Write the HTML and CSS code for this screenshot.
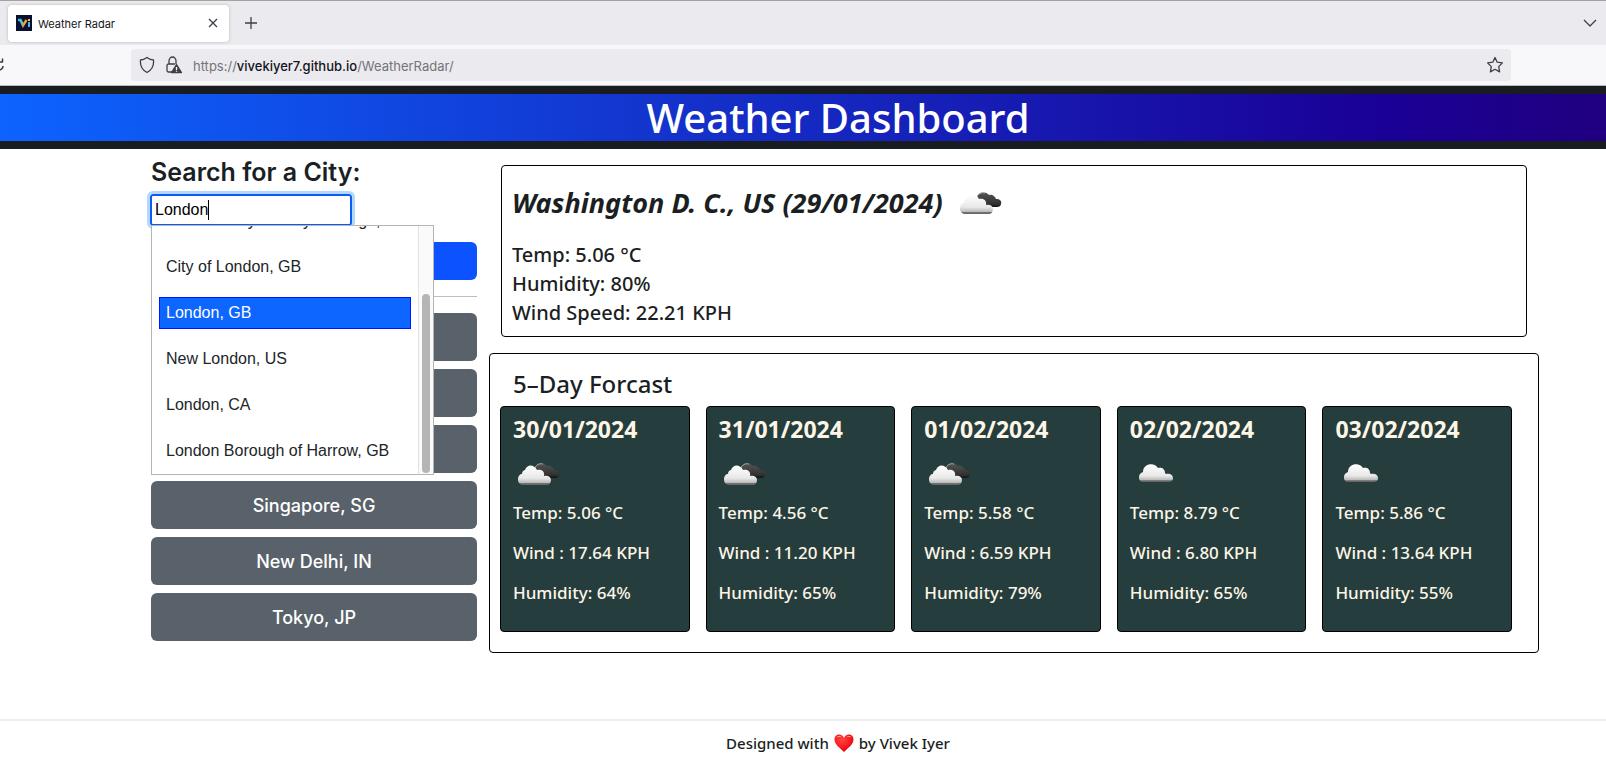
FILE: index.html
```html
<!DOCTYPE html>
<html lang="en">
<head>
<meta charset="utf-8">
<title>Weather Radar</title>
<link rel="stylesheet" href="styles.css">
</head>
<body>
<svg class="defs" width="0" height="0" aria-hidden="true">
  <defs>
    <linearGradient id="light" x1="0" y1="0" x2="0" y2="1">
      <stop offset="0" stop-color="#fff"/><stop offset=".65" stop-color="#e8e8e8"/><stop offset=".88" stop-color="#bbb"/><stop offset=".94" stop-color="#555"/><stop offset="1" stop-color="#777"/>
    </linearGradient>
    <linearGradient id="dark" x1="0" y1="0" x2="0" y2="1">
      <stop offset="0" stop-color="#555"/><stop offset=".8" stop-color="#303030"/><stop offset="1" stop-color="#111"/>
    </linearGradient>
    <radialGradient id="red" cx=".4" cy=".3" r=".8">
      <stop offset="0" stop-color="#ff4a40"/><stop offset=".6" stop-color="#f8131a"/><stop offset="1" stop-color="#b80010"/>
    </radialGradient>
    <linearGradient id="brand" x1="0" y1="0" x2="1" y2="0">
      <stop offset="0" stop-color="#2db8d8"/><stop offset=".4" stop-color="#58c8d0"/><stop offset=".7" stop-color="#f3a030"/><stop offset="1" stop-color="#f3a030"/>
    </linearGradient>
    <symbol id="broken" viewBox="0 0 50 50">
      <path fill="url(#dark)" d="M22 22c-1-6 8-9 12-4 3-1 6 1 7 4 4 0 6 2 5 5 0 2-2 3-4 3H29l-7-3z"/>
      <path fill="none" stroke="#aaa" d="M22 20c1-3 4-5 8-4"/>
      <path fill="url(#light)" d="M11 37c-4 0-6-2-6-5.500s2-5.500 4-5.500c0-3 2-4 3-4 2-6 9-6 12 0 5-1 8 2 7 6 4-1 7 1 7 4s-2 5-4 5z"/>
    </symbol>
    <symbol id="cloud" viewBox="0 0 50 50">
      <path fill="url(#light)" d="M14 34c-4 0-5-2-5-5s2-4 4-5c0-9 12-10 15-4 4-1 7 1 7 5l1 1c4-1 7 1 7 4s-2 4-5 4z"/>
    </symbol>
  </defs>
</svg>

<div class="tabs">
  <div class="tab">
    <svg class="favicon" viewBox="0 0 16 16" aria-hidden="true"><path fill="#0c1030" d="M0 0h16v16H0z"/><path fill="none" stroke="url(#brand)" stroke-width="2.500" d="M2 5h2.500l2.500 5.500L10.500 5"/><path stroke="#4cb8d8" stroke-width="2" d="M13 7v5"/><path stroke="#f3c040" stroke-width="2" d="M13 4v2"/></svg>
    <span class="tab-name">Weather Radar</span>
    <button class="icon-button" type="button" aria-label="Close tab"><svg width="10" height="10" viewBox="0 0 10 10"><path d="M1 1l8 8M9 1L1 9"/></svg></button>
  </div>
  <button class="icon-button new-tab" type="button" aria-label="New tab"><svg width="12" height="12" viewBox="0 0 12 12"><path d="M6 0v12M0 6h12"/></svg></button>
  <button class="icon-button all-tabs" type="button" aria-label="List all tabs"><svg width="14" height="8" viewBox="0 0 14 8"><path d="M1 1l6 6 6-6"/></svg></button>
</div>
<div class="toolbar">
  <button class="icon-button reload" type="button" aria-label="Reload"><svg width="4" height="16" viewBox="0 0 4 16"><path stroke-width="1.500" d="M0 5h2.500V1.500M0 13c2-1 3-2.500 3-4"/></svg></button>
  <div class="address">
    <svg width="16" height="18" viewBox="0 0 16 18"><path d="M8 1.500C6 3 4 4 1.500 4 1 9 3 14 8 16.500 13 14 15 9 14.500 4 12 4 10 3 8 1.500z"/></svg>
    <svg class="lock" width="18" height="18" viewBox="0 0 18 18"><path d="M4 8V5a3.500 4 0 0 1 7 0v3M7 16H3.500A1.500 1.500 0 0 1 2 14.500v-5A1.500 1.500 0 0 1 3.500 8H10"/><path class="solid" d="M11.500 8.500L16.500 16.500h-10z"/><path class="mark" d="M11.500 11v3M11.500 14.800v1"/></svg>
    <span class="url">https://<b>vivekiyer7.github.io</b>/WeatherRadar/</span>
    <button class="icon-button star" type="button" aria-label="Bookmark this page"><svg width="18" height="18" viewBox="0 0 18 18"><path d="M9 1.500l2.200 4.700 5.200.7-3.700 3.700.9 5.300L9 13.300l-4.600 2.600.9-5.300L1.600 6.900l5.200-.7z"/></svg></button>
  </div>
</div>

<header class="banner"><h1>Weather Dashboard</h1></header>

<main class="layout">
  <aside class="sidebar">
    <form class="search">
      <label class="search-title" for="city">Search for a City:</label>
      <div class="field">
        <input id="city" type="text" value="London" autocomplete="off"><span class="caret"></span>
        <div class="menu">
          <ul class="options">
            <li><button type="button">Londonderry County Borough, GB</button></li>
            <li><button type="button">City of London, GB</button></li>
            <li><button type="button" class="active">London, GB</button></li>
            <li><button type="button">New London, US</button></li>
            <li><button type="button">London, CA</button></li>
            <li><button type="button">London Borough of Harrow, GB</button></li>
          </ul>
          <div class="track"><div class="thumb"></div></div>
        </div>
      </div>
      <button class="submit" type="submit" aria-label="Search"></button>
    </form>
    <hr class="rule">
    <div class="history">
      <button type="button" aria-label="Recent city 1"></button>
      <button type="button" aria-label="Recent city 2"></button>
      <button type="button" aria-label="Recent city 3"></button>
      <button type="button">Singapore, SG</button>
      <button type="button">New Delhi, IN</button>
      <button type="button">Tokyo, JP</button>
    </div>
  </aside>
  <div class="weather">
    <section class="today">
      <h2>Washington D. C., US (29/01/2024) <svg class="sky" role="img" aria-label="Broken clouds"><use href="#broken"/></svg></h2>
      <p>Temp: 5.06 °C</p>
      <p>Humidity: 80%</p>
      <p>Wind Speed: 22.21 KPH</p>
    </section>
    <section class="forecast">
      <h2>5–Day Forcast</h2>
      <div class="days">
        <article class="day"><h3>30/01/2024</h3><svg class="sky" role="img" aria-label="Broken clouds"><use href="#broken"/></svg><p>Temp: 5.06 °C</p><p>Wind : 17.64 KPH</p><p>Humidity: 64%</p></article>
        <article class="day"><h3>31/01/2024</h3><svg class="sky" role="img" aria-label="Broken clouds"><use href="#broken"/></svg><p>Temp: 4.56 °C</p><p>Wind : 11.20 KPH</p><p>Humidity: 65%</p></article>
        <article class="day"><h3>01/02/2024</h3><svg class="sky" role="img" aria-label="Broken clouds"><use href="#broken"/></svg><p>Temp: 5.58 °C</p><p>Wind : 6.59 KPH</p><p>Humidity: 79%</p></article>
        <article class="day"><h3>02/02/2024</h3><svg class="sky" role="img" aria-label="Cloudy"><use href="#cloud"/></svg><p>Temp: 8.79 °C</p><p>Wind : 6.80 KPH</p><p>Humidity: 65%</p></article>
        <article class="day"><h3>03/02/2024</h3><svg class="sky" role="img" aria-label="Cloudy"><use href="#cloud"/></svg><p>Temp: 5.86 °C</p><p>Wind : 13.64 KPH</p><p>Humidity: 55%</p></article>
      </div>
    </section>
  </div>
</main>

<footer class="footer">Designed with <svg class="heart" viewBox="0 0 20 20" role="img" aria-label="love"><path fill="url(#red)" d="M10 19C6 15 .5 11.500.5 6.500.5 3.500 2.500 1.500 5.200 1.500c2.300 0 4 1.300 4.800 3.500.8-2.200 2.500-3.500 4.800-3.500 2.700 0 4.700 2 4.700 5C19.500 11.500 14 15 10 19z"/><path fill="#ffb0a8" d="M2.500 4.500c1-1.800 4-2 5-.5-2-.5-3.500-.3-5 .5zM12.500 4c1-1.500 4-1.300 5 .5-1.500-.8-3-1-5-.5z"/></svg> by Vivek Iyer</footer>
</body>
</html>
```

FILE: styles.css
```css
* { box-sizing: border-box; }
body { margin: 0; background: #fff; color: #1b1f23; font-family: "Noto Sans", sans-serif; font-weight: 500; }
h1, h2, h3, p, ul { margin: 0; padding: 0; font-weight: 500; }
button { font: inherit; border: 0; padding: 0; }
.defs { position: absolute; }

.tabs, .toolbar, .address, .tab { display: flex; align-items: center; }
.tabs { height: 45px; padding: 0 16px 0 8px; background: #ebeaef; border-top: 1px solid #a5a19f; }
.tab { width: 221px; height: 37px; padding: 0 11px 0 8px; gap: 6px; background: #fff; border-radius: 4px; box-shadow: 0 0 3px #8888; }
.favicon { width: 16px; height: 16px; }
.tab-name { flex: 1; padding-top: 2px; font: 11px Inter, sans-serif; color: #15141a; }
.icon-button { display: flex; background: none; }
.icon-button svg, .address > svg { fill: none; stroke: #3f3e48; stroke-width: 1.3; stroke-linejoin: round; }
.new-tab { margin-left: 16px; }
.all-tabs { margin-left: auto; margin-right: -7px; }
.toolbar { height: 41px; background: #f8f8fa; border-bottom: 1px solid #b8bcc0; padding-right: 95px; }
.reload { width: 131px; }
.address { flex: 1; height: 32px; padding: 0 7px 0 8px; background: #ebeaef; border-radius: 4px; }
.address .lock { margin-left: 10px; }
.address .lock .solid { fill: #3f3e48; }
.address .lock .mark { stroke: #fff; }
.url { margin-left: 10px; padding-top: 2px; font: 13px Inter, sans-serif; color: #74737b; }
.url b { font-weight: 500; color: #15141a; }
.star { margin-left: auto; }

.banner { border: solid #1a1d20; border-width: 8px 0; background: linear-gradient(90deg, #0d63ff, #1a0096 86%, #200080); color: #fff; text-align: center; padding-left: 70px; }
.banner h1 { font-size: 40px; line-height: 47px; }

.layout { display: flex; gap: 12px; padding: 8px 67px 0 151px; }
.sidebar { flex: 0 0 326px; font-family: Inter, sans-serif; }
.search-title { display: block; height: 37px; font-size: 25px; line-height: 30px; font-weight: 600; }
.field { position: relative; height: 48px; font: 16px "Liberation Sans", sans-serif; }
.field input { display: block; width: 202px; height: 32px; margin-left: -1px; padding: 0 3px; border: 2px solid #0a5cf5; border-radius: 3px; outline: 3px solid #b4d8fd; font: inherit; color: #000; background: #fff; }
.caret { position: absolute; left: 57px; top: 6px; width: 1px; height: 20px; background: #000; }
.menu { position: absolute; z-index: 1; top: 31px; left: 0; width: 283px; height: 250px; display: flex; background: #fff; border: 1px solid #b5b5b5; overflow: hidden; }
.options { flex: 1; height: 248px; display: flex; flex-direction: column; justify-content: flex-end; gap: 14px; padding: 7px; list-style: none; overflow: hidden; }
.options button { display: block; width: 100%; height: 32px; padding: 0 6px; border: 1px solid transparent; background: none; text-align: left; color: #212529; white-space: nowrap; }
.options .active { background: #0d66ff; border-color: #0014ff; color: #fff; }
.track { width: 15px; padding: 68px 3px 0; background: #fafafa; border-left: 1px solid #e2e2e2; }
.thumb { width: 8px; height: 179px; border-radius: 4px; background: #b5b5b5; }
.submit { display: block; width: 100%; height: 38px; border-radius: 6px; background: #0d52ff; }
.rule { margin: 16px 0; border: 0; border-top: 1px solid #bcbdbe; }
.history { display: grid; gap: 8px; }
.history button { height: 48px; border-radius: 6px; background: #59616a; color: #fff; font-size: 18px; font-weight: 500; }

.weather { flex: 1; min-width: 0; padding-top: 8px; }
.today { margin: 0 12px 16px; height: 172px; padding: 11px 10px 0; border: 1px solid #000; border-radius: 4px; font-size: 20px; line-height: 29px; }
.today h2 { display: flex; align-items: center; gap: 12px; height: 50px; margin-bottom: 13px; font-size: 27px; font-style: italic; font-weight: 700; }
.sky { width: 50px; height: 50px; }
.forecast { min-height: 299px; padding: 15px 26px 20px 10px; border: 1px solid #000; border-radius: 4px; }
.forecast h2 { padding-left: 13px; font-size: 24px; line-height: 29px; margin-bottom: 8px; }
.days { display: grid; grid-template-columns: repeat(5, 1fr); gap: 16px; }
.day { height: 226px; padding: 9px 12px 0; background: #253d3d; border: 1px solid #000; border-radius: 4px; color: #fdf5e6; font-size: 17px; line-height: 24px; }
.day h3 { font-size: 23px; line-height: 26px; font-weight: 700; }
.day .sky { display: block; margin: 6px 0 3px; }
.day p { margin-bottom: 16px; }

.footer { display: flex; justify-content: center; align-items: center; gap: 5px; margin-top: 66px; padding: 10px 0 12px 70px; border-top: 2px solid #ededed; font-size: 15px; line-height: 24px; }
.heart { width: 20px; height: 20px; }
```
